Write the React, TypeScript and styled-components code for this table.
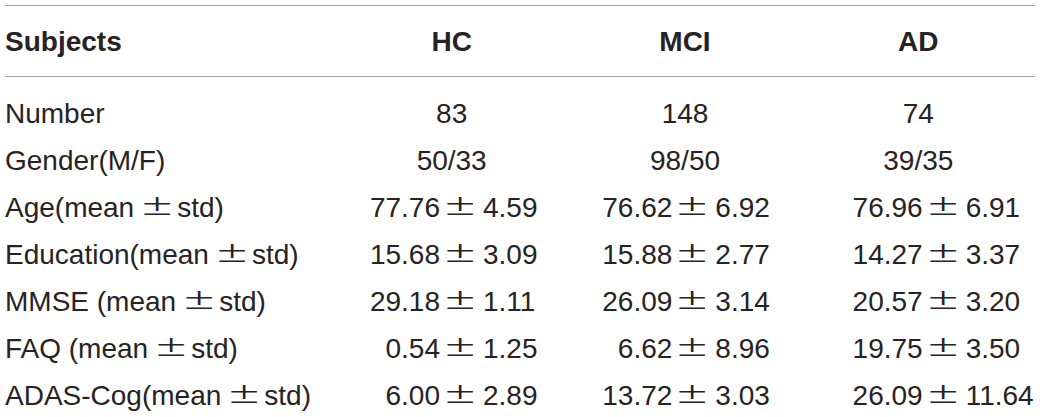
import React from "react";
import styled, { createGlobalStyle } from "styled-components";

const Global = createGlobalStyle`
  html, body { margin: 0; padding: 0; background: #ffffff; }
  body { font-family: "Liberation Sans", Arial, sans-serif; color: #262324; }
`;

const Page = styled.div`
  padding: 5px 5px 0 5px;
  width: 1030px;
`;

const Table = styled.div`
  display: grid;
  grid-template-columns: 330px repeat(3, 1fr);
  border-top: 1px solid #a3a3a3;
`;

const HeadRow = styled.div`
  display: contents;
`;

const HeadCell = styled.div<{ $align?: "left" | "center" }>`
  font-weight: 700;
  font-size: 28px;
  line-height: 47px;
  padding: 12px 0 11px;
  text-align: ${(p) => p.$align ?? "center"};
  border-bottom: 1px solid #a3a3a3;
  white-space: nowrap;
`;

const Cell = styled.div<{ $first?: boolean; $align?: "left" | "center" }>`
  font-size: 28px;
  line-height: 47px;
  height: 47px;
  padding-top: ${(p) => (p.$first ? "13px" : "0")};
  text-align: ${(p) => p.$align ?? "center"};
  white-space: nowrap;
`;

const PmCell = styled.div<{ $first?: boolean; $left: number }>`
  display: grid;
  grid-template-columns: ${(p) => p.$left}px 43px auto;
  font-size: 28px;
  line-height: 47px;
  height: 47px;
  padding-top: ${(p) => (p.$first ? "13px" : "0")};
  white-space: nowrap;
`;

const PmLeft = styled.span`
  text-align: right;
`;

const PmSign = styled.span`
  display: block;
  padding-left: 1px;
`;

const PmGlyph = styled.span<{ $gap?: boolean }>`
  display: inline-block;
  width: 27px;
  font-family: "Inter", sans-serif;
  font-weight: 200;
  font-size: 36px;
  line-height: 1;
  vertical-align: baseline;
  transform: scaleX(1.65);
  transform-origin: left center;
  margin: ${(p) => (p.$gap ? "0 12px 0 4px" : "0")};
`;

const PmRight = styled.span`
  text-align: left;
`;

type Val = string | [string, string];

const columns = [
  { name: "HC", left: 105 },
  { name: "MCI", left: 104 },
  { name: "AD", left: 121 },
];

const rows: { label: string; std?: boolean; values: Val[] }[] = [
  { label: "Number", values: ["83", "148", "74"] },
  { label: "Gender(M/F)", values: ["50/33", "98/50", "39/35"] },
  {
    label: "Age(mean",
    std: true,
    values: [
      ["77.76", "4.59"],
      ["76.62", "6.92"],
      ["76.96", "6.91"],
    ],
  },
  {
    label: "Education(mean",
    std: true,
    values: [
      ["15.68", "3.09"],
      ["15.88", "2.77"],
      ["14.27", "3.37"],
    ],
  },
  {
    label: "MMSE (mean",
    std: true,
    values: [
      ["29.18", "1.11"],
      ["26.09", "3.14"],
      ["20.57", "3.20"],
    ],
  },
  {
    label: "FAQ (mean",
    std: true,
    values: [
      ["0.54", "1.25"],
      ["6.62", "8.96"],
      ["19.75", "3.50"],
    ],
  },
  {
    label: "ADAS-Cog(mean",
    std: true,
    values: [
      ["6.00", "2.89"],
      ["13.72", "3.03"],
      ["26.09", "11.64"],
    ],
  },
];

export default function App() {
  return (
    <>
      <Global />
      <Page>
        <Table>
          <HeadRow>
            <HeadCell $align="left">Subjects</HeadCell>
            {columns.map((c) => (
              <HeadCell key={c.name}>{c.name}</HeadCell>
            ))}
          </HeadRow>
          {rows.map((r, i) => (
            <React.Fragment key={r.label}>
              <Cell $first={i === 0} $align="left">
                {r.label}
                {r.std && (
                  <>
                    <PmGlyph $gap>±</PmGlyph>std)
                  </>
                )}
              </Cell>
              {r.values.map((v, j) =>
                typeof v === "string" ? (
                  <Cell key={j} $first={i === 0}>
                    {v}
                  </Cell>
                ) : (
                  <PmCell key={j} $first={i === 0} $left={columns[j].left}>
                    <PmLeft>{v[0]}</PmLeft>
                    <PmSign>
                      <PmGlyph>±</PmGlyph>
                    </PmSign>
                    <PmRight>{v[1]}</PmRight>
                  </PmCell>
                )
              )}
            </React.Fragment>
          ))}
        </Table>
      </Page>
    </>
  );
}
